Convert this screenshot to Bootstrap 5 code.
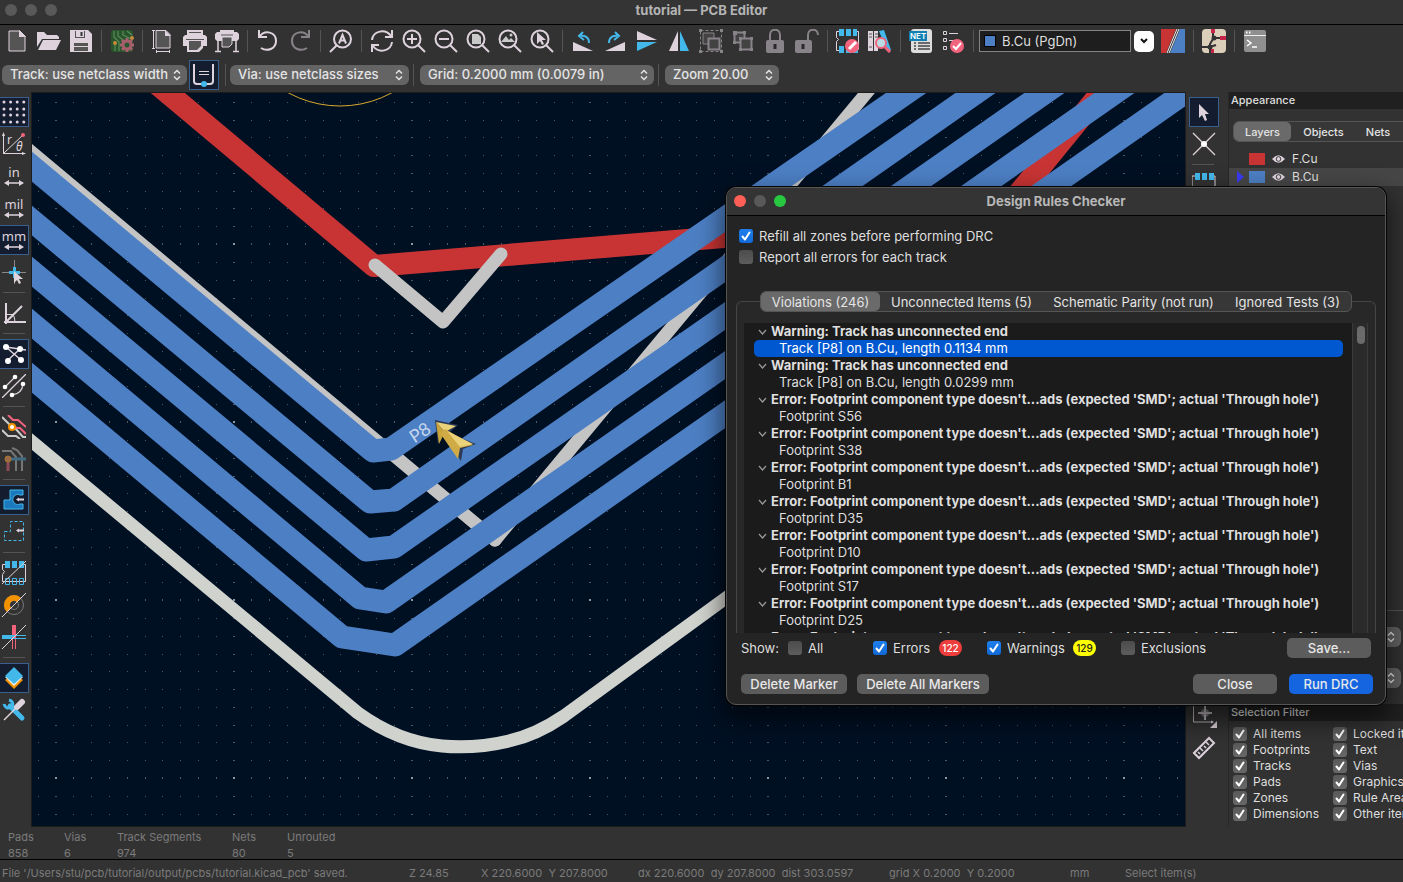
<!DOCTYPE html>
<html lang="en">
<head>
<meta charset="utf-8">
<meta name="viewport" content="width=device-width, initial-scale=1">
<title>tutorial — PCB Editor</title>
<link href="https://cdn.jsdelivr.net/npm/bootstrap@5.3.0/dist/css/bootstrap.min.css" rel="stylesheet">
<style>
:root{--ink:#ded3dd;--sky:#42b8eb;--rose:#f2647e;--line:#545454;--panel:#323232}
body{font-family:Inter,"Liberation Sans",sans-serif;font-size:12px;line-height:16px;color:#dfdfdf;background:var(--panel)}
svg{display:block;fill:none}
.i{stroke:var(--ink);stroke-width:2}
.f{fill:var(--ink)}
.s{fill:var(--sky)}
.ss{stroke:var(--sky);stroke-width:2}
.r{fill:var(--rose)}
.dk{fill:#555}
.titlebar{height:25px;border-bottom:1px solid #000;background:#343434;color:#b4b4b4;font-size:13px;font-weight:700;padding-bottom:4px}
.lights{left:5px;top:4px;gap:8px}
.lights i{width:12px;height:12px;border-radius:50%;background:#595959}
.bar-main{height:32px;padding-left:1px}
.bar-sub{height:35px;padding-left:2px}
.tool{width:32px;height:32px;padding:0;border:0;background:none;color:inherit;display:flex;align-items:center;justify-content:center;flex:none}
.tool.dim{opacity:.5}
.vsep{width:9px;flex:none;display:flex;justify-content:center}
.vsep::before{content:"";width:1px;height:22px;background:var(--line)}
.pick{appearance:none;border:0;border-radius:6px;height:20px;line-height:18px;padding:0 14px 2px 8px;color:#e4e4e4;font-size:13px;font-weight:500;background:#646464 url("data:image/svg+xml,%3Csvg xmlns='http://www.w3.org/2000/svg' width='8' height='12' fill='none' stroke='%23e4e4e4' stroke-width='1.5'%3E%3Cpath d='M1 4.5l3-3 3 3M1 7.5l3 3 3-3'/%3E%3C/svg%3E") no-repeat right 6px center}
.on{background:#131d2f;border:1px solid #3b5f8c}
.bar-sub .on{width:30px;height:30px;margin:0 2px}
.bar-sub .vsep + .pick{margin-left:2px}
.bar-sub .on + .vsep + .pick{margin-left:0}
.layerbox{width:152px;height:22px;margin-left:1px;border:1px solid #858585;background:#1e1e1e;font-size:13px;padding-left:4px;gap:6px}
.chip{width:12px;height:12px;background:#4d7fc4;border:1px solid #000}
.drop{width:20px;height:21px;border:0;border-radius:5px;background:#fff;padding:0;margin:0 3px}
.side{width:31px;padding-top:4px;flex:none}
.side .tool{width:28px}
.side .tool.on{width:29px;height:30px;margin:1px 0;border-left-width:0}
.side text{font-family:"Noto Sans",sans-serif}
.hsep{height:9px;display:flex;align-items:center;padding-left:3px}
.hsep::before{content:"";height:1px;width:22px;background:var(--line)}
.board{border:1px solid #1c1c1c;background:#001023;min-width:0}
.rside{width:42px;padding:4px 0 63px 3px;flex:none}
.rside .tool{width:30px}
.rside .tool.on{height:30px;margin:1px 0}
.dock{width:175px;flex:none;border-left:1px solid #282828}
.dockhead{height:17px;background:#202020;padding-left:2px;font-size:11px;font-weight:500}
.segs{background:#373737;border:1px solid #555;border-radius:6px;height:21px}
.segs button{border:0;background:none;color:#e4e4e4;padding:0;font-size:13px;line-height:18px;white-space:nowrap}
.segs button.active{background:#6a6a6a;border-radius:5px}
.dock .segs{margin:12px -20px 8px 4px}
.dock .segs button{font-size:11px;font-weight:500}
.layer{height:18px;padding-left:8px;gap:7px}
.layer svg:first-child{margin-right:1px}
.swatch{width:16px;height:12px}
.views{border-top:1px solid #555;padding:16px 2px 16px 0;gap:21px}
.views .pick{width:150px}
.filters{display:grid;grid-template-columns:100px 100px;grid-auto-rows:16px;padding:5px 0 4px 4px;margin-bottom:1px}
.opt{display:flex;align-items:center;gap:6px;white-space:nowrap}
.tick{appearance:none;width:14px;height:14px;border-radius:3px;background:linear-gradient(#4c4c4c,#5d5d5d);margin:0;flex:none}
.tick:checked{background:url("data:image/svg+xml,%3Csvg xmlns='http://www.w3.org/2000/svg' viewBox='0 0 14 14' fill='none' stroke='white' stroke-width='2' stroke-linecap='round' stroke-linejoin='round'%3E%3Cpath d='M3.5 7.5l2.500 3L10.500 3.500'/%3E%3C/svg%3E"),linear-gradient(#5a5a5a,#686868)}
.tick.blue:checked{background:url("data:image/svg+xml,%3Csvg xmlns='http://www.w3.org/2000/svg' viewBox='0 0 14 14' fill='none' stroke='white' stroke-width='2' stroke-linecap='round' stroke-linejoin='round'%3E%3Cpath d='M3.5 7.5l2.500 3L10.500 3.500'/%3E%3C/svg%3E"),linear-gradient(#1f7fee,#1169d6)}
.info{height:32px;font-size:11px;color:#7b7b7b;padding:2px 0 0 8px;display:grid;grid-template-columns:56px 53px 115px 55px 1fr}
.status{height:23px;border-top:1px solid #000;font-size:11px;color:#7b7b7b;padding:4px 0 0 2px;display:grid;grid-template-columns:407fr 72fr 157fr 251fr 181fr 55fr 278fr;align-items:center;white-space:pre}
.drc{right:17px;top:187px;width:660px;border-radius:10px;background:#242424;border:1px solid #565656;box-shadow:0 0 0 1px #050505,0 12px 26px 4px rgba(0,0,0,.55);z-index:5;font-size:13px}
.drchead{height:28px;padding-bottom:2px;border-bottom:1px solid #000;background:#343434;border-radius:9px 9px 0 0;color:#b8b8b8;font-weight:700}
.drc .lights{left:7px;top:7px}
.drcbody{padding:12px 9px 10px 9px}
.runopts{padding:0 3px;gap:5px}
.pages{margin-top:26px;padding:0 24px;position:relative;z-index:1}
.frame{border:1px solid #454545;border-bottom:0;border-radius:6px 6px 0 0;margin-top:-11px;padding:21px 7px 0;background:#282828}
.tree{height:310px;background:#1b1b1b;overflow:hidden;padding:0 9px 0 10px;list-style:none;margin:0;border-right:1px solid #3b3b3b}
.tree li{height:17px;line-height:17px;border-radius:5px;padding-left:25px;white-space:nowrap}
.tree li.top{padding-left:4px;font-weight:700;display:flex;align-items:center;gap:4px}
.tree li.sel{background:#0058d0;color:#fff}
.track{width:15px;background:#2b2b2b;border-right:1px solid #3b3b3b;padding:3px 0 0 4px}
.thumb{width:8px;height:18px;border-radius:4px;background:#6b6b6b}
.show{padding:0 5px;margin-top:5px}
.count{border-radius:9px;min-width:23px;height:16px;padding:0 2px;font-size:10px;line-height:16px;font-weight:500;text-align:center}
.push{border:0;border-radius:5px;height:20px;background:#5c5c5c;color:#e8e8e8;font-size:13px;font-weight:500;line-height:20px;padding:0;width:84px}
.push.go{background:#1565e0;margin-left:2px}
.actions{padding:0 3px 0 5px;gap:10px}
</style>
</head>
<body class="vh-100 d-flex flex-column overflow-hidden position-relative">
<header class="titlebar position-relative d-flex align-items-center justify-content-center flex-shrink-0">
<div class="lights position-absolute d-flex"><i></i><i></i><i></i></div>tutorial — PCB Editor</header>

<nav class="bar-main d-flex align-items-center flex-shrink-0" aria-label="Main toolbar">
<button class="tool" aria-label="New"><svg width="24" height="24"><path class="dk" d="M4 2h11l5 5v15H4z" stroke="#ded3dd" stroke-width="1"/><path class="f" d="M14 1l7 7h-7z"/></svg></button>
<button class="tool" aria-label="Open"><svg width="24" height="24"><path class="f" d="M0 18V3h7l3 3h10l2 2v2H5z"/><path class="f" d="M6 11h18l-5 10H1z"/></svg></button>
<button class="tool" aria-label="Save"><svg width="24" height="24"><path class="f" d="M1 1h18l4 4v18H1z"/><path class="dk" d="M6 2h10v7H6zM5 14h14v8H5z"/><path class="f" d="M7 2h8v6H7z"/><path d="M12.500 3v4" stroke="#333" stroke-width="2"/><path d="M5 17.500h14" stroke="#ded3dd"/></svg></button>
<span class="vsep"></span>
<button class="tool" aria-label="Board setup"><svg width="24" height="24"><rect x="1" y="1" width="22" height="22" rx="3" fill="#28562c"/><path d="M4 2v6l5 5v9M8 2v5l5 4M13 2v4l8 4M17 2l5 4M5 15v7" stroke="#5d8a5a" stroke-width="1.200"/><circle cx="5" cy="14" r="2" fill="#c48a3c"/><circle cx="22" cy="9" r="2" fill="#c48a3c"/><path d="M17 9v14M10 16h14M12 11l10 10M22 11L12 21" stroke="#a85f6d" stroke-width="3"/><circle cx="17" cy="16" r="4" stroke="#a85f6d" stroke-width="3" fill="#28562c"/></svg></button>
<span class="vsep"></span>
<button class="tool" aria-label="Page settings"><svg width="24" height="24"><path class="dk" d="M5 1.500h10l4 4V19H5z" stroke="#ded3dd"/><path class="f" d="M14 1l6 6h-6z"/><path d="M2.500 1v19M1 1.500h3M1 19.500h3M5 22.500h14M5.500 21v3M18.500 21v3" stroke="#ded3dd"/></svg></button>
<button class="tool" aria-label="Print"><svg width="24" height="24"><path class="f" d="M4 1h16v5H4zM2 6h20l2 2v9h-4v2l-4 4H4v-6H0V8z"/><path class="dk" d="M6 12h12v5l-4 4H6z"/><path d="M3 10.500h18M6 3.500h12" stroke="#555"/></svg></button>
<button class="tool" aria-label="Plot"><svg width="24" height="24"><path class="f" d="M5 1h14v2h3l2 2v5l-2 2H2l-2-2V5l2-2h3z"/><path class="dk" d="M7 8h10v7l-3 3H7z" stroke="#ded3dd"/><path d="M6 6h12" stroke="#555"/><path d="M3 12v11M21 12v11M0 22.500h6M18 22.500h6" stroke="#ded3dd" stroke-width="1.500"/></svg></button>
<span class="vsep"></span>
<button class="tool" aria-label="Undo"><svg width="24" height="24"><path class="i" d="M3 1v7h8M3 8C9 0 20 3 20 12c0 8-9 11-15 7"/></svg></button>
<button class="tool dim" aria-label="Redo"><svg width="24" height="24"><path class="i" d="M21 1v7h-8M21 8C15 0 4 3 4 12c0 8 9 11 15 7"/></svg></button>
<span class="vsep"></span>
<button class="tool" aria-label="Find"><svg width="24" height="24"><circle class="i" cx="13.500" cy="10" r="8.500"/><path class="i" d="M8 16l-7 7M10 14.500L13.500 6l3.500 8.500M11.500 11.500h4" stroke-width="2"/></svg></button>
<span class="vsep"></span>
<button class="tool" aria-label="Refresh"><svg width="24" height="24"><path class="i" d="M2 11C3 2 15-1 21 7M22 13c-1 9-13 12-19 4M22 1v7h-7M2 23v-7h7"/></svg></button>
<button class="tool" aria-label="Zoom in"><svg width="24" height="24"><circle class="i" cx="10" cy="10" r="8.500"/><path class="i" d="M16 16l7 7M5 10h10M10 5v10"/></svg></button>
<button class="tool" aria-label="Zoom out"><svg width="24" height="24"><circle class="i" cx="10" cy="10" r="8.500"/><path class="i" d="M16 16l7 7M5 10h10"/></svg></button>
<button class="tool" aria-label="Zoom to page"><svg width="24" height="24"><circle class="i" cx="10" cy="10" r="8.500"/><path class="i" d="M16 16l7 7"/><path fill="#c9c9c9" d="M6 5h6l3 3v7H6z"/></svg></button>
<button class="tool" aria-label="Zoom to objects"><svg width="24" height="24"><circle class="i" cx="10" cy="10" r="8.500"/><path class="i" d="M16 16l7 7"/><path fill="#c9c9c9" d="M3 13l5-6 3 4 2-2 4 4z"/><circle cx="13" cy="6" r="1.500" fill="#c9c9c9"/></svg></button>
<button class="tool" aria-label="Zoom to selection"><svg width="24" height="24"><circle class="i" cx="10" cy="10" r="8.500"/><path class="i" d="M16 16l7 7"/><path class="f" d="M7 3v12l3-3 2 4 2-1-2-4h4z"/></svg></button>
<span class="vsep"></span>
<button class="tool" aria-label="Rotate counterclockwise"><svg width="24" height="24"><path class="f" d="M2 13v9h20z"/><path class="ss" d="M12 3L8 7l5 4M8 7c6-1 10 1 10 7"/></svg></button>
<button class="tool" aria-label="Rotate clockwise"><svg width="24" height="24"><path class="f" d="M22 13v9H2z"/><path class="ss" d="M12 3l4 4-5 4M16 7C10 6 6 8 6 14"/></svg></button>
<button class="tool" aria-label="Mirror vertically"><svg width="24" height="24"><path class="f" d="M2 2v9h20z"/><path class="s" d="M2 22v-9h20z"/></svg></button>
<button class="tool" aria-label="Mirror horizontally"><svg width="24" height="24"><path class="f" d="M2 22h9V2z"/><path class="s" d="M22 22h-9V2z"/></svg></button>
<button class="tool dim" aria-label="Group"><svg width="24" height="24"><path d="M1.500 1.500h21v21h-21z" stroke="#ded3dd" stroke-dasharray="3 2"/><path d="M4 4h11v11H4z" stroke="#ded3dd" fill="#555"/><path d="M9.500 9.500h11v11h-11z" stroke="#ded3dd" stroke-width="2" fill="#555"/><path class="f" d="M0 0h3v3H0zM21 0h3v3h-3zM0 21h3v3H0zM21 21h3v3h-3z"/></svg></button>
<button class="tool dim" aria-label="Ungroup"><svg width="24" height="24"><path d="M3.500 3.500h10v10h-10z" stroke="#ded3dd" stroke-width="2" fill="#555"/><path d="M9.500 9.500h11v11h-11z" stroke="#ded3dd" stroke-width="2" fill="#555"/><path class="f" d="M2 2h4v4H2zM12 2h3v3h-3zM2 12h3v3H2zM8 8h3v3H8zM19 8h3v3h-3zM8 19h3v3H8zM19 19h3v3h-3z"/></svg></button>
<button class="tool dim" aria-label="Lock"><svg width="24" height="24"><path class="i" d="M7 11V6c0-7 10-7 10 0v5"/><rect class="f" x="3" y="11" width="18" height="13" rx="2"/><path d="M12 15v5" stroke="#222" stroke-width="3"/></svg></button>
<button class="tool dim" aria-label="Unlock"><svg width="24" height="24"><path class="i" d="M13 11V6c0-7 10-7 10 0"/><rect class="f" x="0" y="11" width="17" height="13" rx="2"/><path d="M8 15v5" stroke="#222" stroke-width="3"/></svg></button>
<span class="vsep"></span>
<button class="tool" aria-label="Footprint editor"><svg width="24" height="24"><path d="M3 2.500H.5v6l2 2-2 2v9H3M21 2.500h1.500v18" stroke="#ded3dd"/><path class="s" d="M3 0h5v7H3zM10 0h5v7h-5zM17 0h4v7h-4zM3 17h5v7H3zM10 17h5v7h-5zM17 17h5v7h-5z"/><circle class="r" cx="16" cy="17" r="7"/><path d="M13 20l7-7" stroke="#fff" stroke-width="3"/></svg></button>
<button class="tool" aria-label="Footprint browser"><svg width="24" height="24"><path class="f" d="M0 2h5v20H0zM6 2h4v20H6z"/><path class="s" d="M11 2l5-1 7 20-4 1z"/><path d="M1 5h3M1 8h3M7 5h3M7 8h3M1 18h3" stroke="#555"/><circle cx="13" cy="14" r="5" fill="#b9dce4" stroke="#f2647e" stroke-width="2"/><path d="M17 18l5 5" stroke="#f2647e" stroke-width="3"/></svg></button>
<span class="vsep"></span>
<button class="tool" aria-label="Update from schematic"><svg width="24" height="24" viewBox="0 0 24 24"><rect x="2" y="0" width="21" height="24" rx="3" fill="#dedede"/><path d="M5 14h2M9 14h12M5 17h2M9 17h12M5 20h2M9 20h12" stroke="#444" stroke-width="1.500"/><rect y="2" width="18" height="10" fill="#1180b5"/><text x="1" y="10" fill="#fff" font-size="8" font-weight="600">NET</text></svg></button>
<button class="tool" aria-label="Design rules checker"><svg width="24" height="24"><path d="M2.500 2.500h3v3h-3zM2.500 9.500h3v3h-3zM2.500 17.500h3v3h-3zM8 4.500h9M8 11.500h8" stroke="#ded3dd"/><circle class="r" cx="16" cy="17" r="7"/><path d="M12 17l3 3 5-6" stroke="#fff" stroke-width="2"/></svg></button>
<span class="vsep"></span>
<div class="layerbox d-flex align-items-center"><span class="chip"></span><span>B.Cu (PgDn)</span></div>
<button class="drop d-flex align-items-center justify-content-center" aria-label="Choose layer"><svg width="10" height="8"><path d="M2 2l3 3 3-3" stroke="#111" stroke-width="2"/></svg></button>
<button class="tool" aria-label="Layer pair"><svg width="24" height="24"><path fill="#c83434" d="M0 0h15L5 24H0z"/><path fill="#4d7fc4" d="M19 0h5v24H9z"/><path d="M16 0L6 24M18 0L8 24" stroke="#eee"/></svg></button>
<span class="vsep"></span>
<button class="tool" aria-label="Router"><svg width="24" height="24"><rect width="24" height="24" rx="4" fill="#dccfb9"/><path d="M11 0v10l-3 5v9M11 9h13M0 18h8l6-2" stroke="#333" stroke-width="2"/><path d="M9 0h4v4H9zM18 7h6v4h-6zM9 20h3v4H9z" fill="#c8254a"/><circle cx="12" cy="9" r="2.500" fill="#333"/><circle cx="8" cy="18" r="2.500" fill="#333"/></svg></button>
<span class="vsep"></span>
<button class="tool" aria-label="Scripting console"><svg width="24" height="24"><rect x="1" y="1" width="22" height="22" rx="2" fill="#8f8f8f"/><path d="M1 6.500h22" stroke="#eee"/><path d="M4 11l4 3-4 3M9 18h5" stroke="#fff" stroke-width="1.500"/><path d="M3 3.500h6" stroke="#fff" stroke-width="2" stroke-dasharray="1.500"/></svg></button>
</nav>

<nav class="bar-sub d-flex align-items-center flex-shrink-0" aria-label="Track settings">
<select class="pick" style="width:185px" aria-label="Track width"><option>Track: use netclass width</option></select>
<button class="tool on" aria-label="Use existing width"><svg width="24" height="24"><path d="M2 1v17q0 3 3 3h13q3 0 3-3V1" stroke="#ded3dd" stroke-width="2"/><path d="M7 8.500h10M7 11.500h10" stroke="#ded3dd"/><circle class="s" cx="12" cy="21" r="3"/></svg></button>
<span class="vsep"></span>
<select class="pick" style="width:179px" aria-label="Via size"><option>Via: use netclass sizes</option></select>
<span class="vsep"></span>
<select class="pick" style="width:234px" aria-label="Grid"><option>Grid: 0.2000 mm (0.0079 in)</option></select>
<span class="vsep"></span>
<select class="pick" style="width:114px" aria-label="Zoom"><option>Zoom 20.00</option></select>
</nav>

<main class="d-flex flex-grow-1" style="min-height:0">
<nav class="side" aria-label="Display options">
<button class="tool on" aria-label="Show grid"><svg width="24" height="24"><g stroke="#ded3dd" stroke-width="3" stroke-linecap="round" stroke-dasharray="0 6.600"><path d="M2 2h21M2 9h21M2 15h21M2 22h21"/></g></svg></button>
<button class="tool" aria-label="Polar coordinates"><svg width="24" height="24" viewBox="0 0 24 24"><path d="M1.500 22V2M1 21.500h22M2 21L21 3" stroke="#ded3dd"/><path class="f" d="M0 4l1.500-4L3 4zM20 20l4 1.500-4 1.500z"/><circle class="r" cx="21" cy="3" r="2"/><text class="f" x="5" y="12" font-size="12">r</text><text class="f" x="14" y="19" font-size="12" font-style="italic">θ</text></svg></button>
<button class="tool" aria-label="Inches"><svg width="24" height="24"><text class="f" x="12" y="13" font-size="13" text-anchor="middle">in</text><path d="M4 19h16" stroke="#ded3dd" stroke-width="1.500"/><path class="f" d="M2 19l5-3v6zM22 19l-5-3v6z"/></svg></button>
<button class="tool" aria-label="Mils"><svg width="24" height="24"><text class="f" x="12" y="13" font-size="13" text-anchor="middle">mil</text><path d="M4 19h16" stroke="#ded3dd" stroke-width="1.500"/><path class="f" d="M2 19l5-3v6zM22 19l-5-3v6z"/></svg></button>
<button class="tool on" aria-label="Millimeters"><svg width="24" height="24"><text class="f" x="12" y="13" font-size="13" text-anchor="middle">mm</text><path d="M4 19h16" stroke="#ded3dd" stroke-width="1.500"/><path class="f" d="M2 19l5-3v6zM22 19l-5-3v6z"/></svg></button>
<button class="tool" aria-label="Full-window crosshairs"><svg width="24" height="24"><path d="M0 12.500h24M12.500 0v24" stroke="#8b8589"/><path d="M7 12.500h11M12.500 7v11" stroke="#42b8eb" stroke-width="3"/><path class="f" d="M12 11v12l3-3 2 4 2-1-2-4h4z"/></svg></button>
<div class="hsep"></div>
<button class="tool" aria-label="Limit to 45 degrees"><svg width="24" height="24"><path class="i" d="M4 2v21M2 21h22M4 21L20 5"/><path d="M5 13.500h6q2 3 2 8" stroke="#ded3dd"/></svg></button>
<div class="hsep"></div>
<button class="tool on" aria-label="Show ratsnest"><svg width="24" height="24"><path d="M4 5l15 13M19 6L5 19M4 5l20 3" stroke="#ded3dd" stroke-width="1.500"/><g fill="#fff"><circle cx="4" cy="5" r="3"/><circle cx="18" cy="7" r="3"/><circle cx="19" cy="18" r="3"/><circle cx="6" cy="19" r="3"/></g></svg></button>
<button class="tool" aria-label="Curved ratsnest"><svg width="24" height="24"><path d="M0 24L24 0M3 13L13 3M10 21q10-1 11-11" stroke="#ded3dd" stroke-width="1.300"/><g fill="#fff"><circle cx="3" cy="13" r="2.300"/><circle cx="13" cy="3" r="2.300"/><circle cx="10" cy="21" r="2.300"/><circle cx="21" cy="10" r="2.300"/></g></svg></button>
<div class="hsep"></div>
<button class="tool" aria-label="Dim inactive nets"><svg width="24" height="24"><path d="M0 2l8 8M10 13h3l8 9h3M0 15l6 6h8l4 3" stroke="#ccc" stroke-width="2"/><path d="M6 0l5 5h5l8 7M10 10l5 3h3l6 6" stroke="#f2647e" stroke-width="2"/><circle cx="10" cy="12" r="3" fill="#fff" stroke="#f39200" stroke-width="2"/></svg></button>
<button class="tool" aria-label="Net highlighting"><svg width="24" height="24"><path d="M0 4h9l5 6v14M10 1l5 2 5 6v15" stroke="#777" stroke-width="2"/><path d="M7 12h17" stroke="#3f6b83" stroke-width="3"/><path d="M6 12v12" stroke="#8d4a58" stroke-width="3"/><circle cx="6" cy="12" r="3" fill="#966b49" stroke="#b0752c"/></svg></button>
<div class="hsep"></div>
<button class="tool on" aria-label="Filled zones"><svg width="24" height="24"><path d="M2 12h6V2h13v5h-3a5 5 0 1 0 0 9h3v5H2z" fill="#1d79bd" stroke="#42b8eb"/><path d="M14 11.500l3-2v1h5v2h-5v1z" class="f"/></svg></button>
<button class="tool" aria-label="Zone outlines"><svg width="24" height="24"><path d="M2.500 11.500h6v-10h13v19h-19z" stroke="#42b8eb" stroke-dasharray="3 2"/><path d="M14 10.500l3-2v1h5v2h-5v1z" class="f"/></svg></button>
<div class="hsep"></div>
<button class="tool" aria-label="Sketch footprints"><svg width="24" height="24"><path d="M3 3.500H.5v5l2 2-2 3v7h23v-17H22" stroke="#ded3dd"/><path class="s" d="M3 0h5v7H3zM10 0h5v7h-5zM17 0h5v7h-5z"/><path d="M3.500 17.500h4v6h-4zM10.500 17.500h4v6h-4zM17.500 17.500h4v6h-4z" stroke="#42b8eb"/><path d="M0 23L24 0" stroke="#ded3dd"/></svg></button>
<button class="tool" aria-label="Sketch pads"><svg width="24" height="24"><circle cx="12" cy="12" r="9.500" stroke="#777"/><circle cx="12" cy="12" r="4.500" stroke="#777"/><path d="M7 17A7 7 0 0 1 17 7" stroke="#f39200" stroke-width="6"/><path d="M0 24L24 0" stroke="#ded3dd"/></svg></button>
<button class="tool" aria-label="Sketch tracks"><svg width="24" height="24"><path d="M12 0v13" stroke="#f2647e" stroke-width="4"/><path d="M0 12h12" stroke="#42b8eb" stroke-width="4"/><path d="M10.500 12v12M13.500 12v12" stroke="#f2647e"/><path d="M12 10.500h12M12 13.500h12" stroke="#42b8eb"/><path d="M0 24L24 0" stroke="#ded3dd"/></svg></button>
<div class="hsep"></div>
<button class="tool on" aria-label="Appearance panel"><svg width="24" height="24"><path fill="#f39200" d="M3 14l9 9 9-9-3-2H6z"/><path fill="#eee" d="M3 11l9 9 9-9z"/><path class="s" d="M12 1l9 9-9 8-9-8z"/></svg></button>
<button class="tool" aria-label="Properties"><svg width="24" height="24"><path d="M8 8l12 12" stroke="#42b8eb" stroke-width="5" stroke-linecap="round"/><path d="M7 2c4 1 5 5 2 7s-6 1-7-3" stroke="#42b8eb" stroke-width="3"/><path d="M2 22L15 9" stroke="#ded3dd" stroke-width="1.500"/><path d="M15 9l5-5" stroke="#ded3dd" stroke-width="6" stroke-linecap="round"/></svg></button>
</nav>

<section class="board flex-grow-1" aria-label="Board">
<svg width="100%" height="100%" viewBox="32 93 1154 733" preserveAspectRatio="xMinYMin slice">
<defs><pattern id="dots" patternUnits="userSpaceOnUse" x="55" y="65" width="178" height="178">
<g fill="#4a5866"><path id="dr" d="M0 0h2v1H0zM18 0h1v1h-1zM36 0h1v1h-1zM54 0h1v1h-1zM72 0h1v1h-1zM90 0h1v1h-1zM107 0h1v1h-1zM125 0h1v1h-1zM143 0h1v1h-1zM161 0h1v1h-1z"/>
<use href="#dr" y="1"/><use href="#dr" y="19"/><use href="#dr" y="37"/><use href="#dr" y="55"/><use href="#dr" y="72"/><use href="#dr" y="90"/><use href="#dr" y="108"/><use href="#dr" y="126"/><use href="#dr" y="143"/><use href="#dr" y="161"/></g><path d="M0 0h2v2H0z" fill="#8f989f"/></pattern></defs>
<rect x="32" y="93" width="1154" height="733" fill="url(#dots)"/>
<circle cx="340" cy="-2" r="108" stroke="#d9a92e"/>
<g stroke="#c83434" stroke-width="22" stroke-linejoin="round"><path d="M144 73L374 266L760 234"/><path d="M1117 73L1024 187L960 265"/></g>
<g stroke="#c4c4c4" stroke-width="13" stroke-linecap="round" stroke-linejoin="round"><path d="M22 144L495 540"/><path d="M495 540L883 73"/><path d="M375 265L443 322L501 254"/></g>
<g stroke="#4d7fc4" stroke-width="23" stroke-linejoin="round">
<path d="M12 150L373 451L391 449L935 73"/>
<path d="M12 204L370 502L394 500L1004 73"/>
<path d="M12 255L366 550L394 547L1073 73"/>
<path d="M12 307L360 598L386 602L1143 73"/>
<path d="M12 361L342 637L395 645L1213 73"/></g>
<path d="M12 425L358 713Q398 742 442 746Q475 749 509 741Q536 735 564 716L800 544" stroke="#d0d2cd" stroke-width="13"/>
<text transform="translate(417 442) rotate(-33)" fill="#c4d5ec" font-size="18" x="-3" y="0" font-family="Lato,sans-serif">P8</text>
<path d="M435 420l23 5-9 8 27 11-13 5-2 12-18-26-5 9z" fill="#2b3b55"/>
<path d="M436 422l20 4-11 6z" fill="#ead27a"/><path d="M436 422l9 10-6 12z" fill="#c9a43c"/><path d="M440 433l5-4 28 16-13 3-2 11z" fill="#d0ab45"/><path d="M447 431l26 13-13 3z" fill="#ead27a"/>
</svg>
</section>

<nav class="rside d-flex flex-column" aria-label="Drawing tools">
<button class="tool on" aria-label="Select"><svg width="24" height="24"><path class="f" d="M7 4v14l3-3 3 6 2-1-2-6h4z"/></svg></button>
<button class="tool" aria-label="Local ratsnest"><svg width="24" height="24"><path d="M1 1l22 22M23 1L1 23" stroke="#ded3dd" stroke-width="1.300"/><circle cx="12" cy="12" r="3" fill="#fff"/></svg></button>
<div class="hsep"></div>
<button class="tool" aria-label="Place footprint"><svg width="24" height="24"><path d="M3 3H0v18h23V3h-2" stroke="#ded3dd"/><path class="s" d="M3 0h5v7H3zM10 0h5v7h-5zM17 0h5v7h-5z"/></svg></button>
<button class="tool mt-auto" aria-label="Set origin"><svg width="26" height="28"><path d="M2.500 3v17H22" stroke="#bdb4bc"/><path class="f" d="M1 4l1.500-3L4 4zM20 18.500l3 1.500-3 1.500z"/><circle cx="14" cy="11" r="4" fill="#777"/><path d="M14 4v14M7 11h14" stroke="#bdb4bc" stroke-width="2"/><path class="f" d="M26 19v7h-7z"/></svg></button>
<button class="tool" aria-label="Measure"><svg width="24" height="24"><path class="i" d="M2 17L17 2l5 5L7 22z"/><path d="M8 18l-2-2M11 15l-3-3M14 12l-2-2M17 9l-3-3" stroke="#ded3dd" stroke-width="1.500"/></svg></button>
</nav>

<aside class="dock d-flex flex-column overflow-hidden">
<div class="dockhead flex-shrink-0">Appearance</div>
<div class="segs d-flex flex-shrink-0" role="tablist">
<button class="active" style="width:57px" role="tab">Layers</button><button style="width:65px" role="tab">Objects</button><button style="width:44px" role="tab">Nets</button></div>
<div class="layer d-flex align-items-center flex-shrink-0"><svg width="4" height="12"></svg><span class="swatch" style="background:#c83434"></span><svg width="13" height="10" viewBox="0 0 14 10"><path d="M0 5q7-8 14 0q-7 8-14 0" class="f"/><circle cx="7" cy="5" r="2.500" stroke="#333"/></svg><span>F.Cu</span></div>
<div class="layer d-flex align-items-center flex-shrink-0" style="background:#464646"><svg width="4" height="12" overflow="visible"><path fill="#3a3af0" d="M0 0l7 6-7 6z"/></svg><span class="swatch" style="background:#4d7fc4"></span><svg width="13" height="10" viewBox="0 0 14 10"><path d="M0 5q7-8 14 0q-7 8-14 0" class="f"/><circle cx="7" cy="5" r="2.500" stroke="#333"/></svg><span>B.Cu</span></div>
<div class="views mt-auto d-flex flex-column align-items-end flex-shrink-0">
<select class="pick" aria-label="Presets"><option></option></select>
<select class="pick" aria-label="Viewports"><option></option></select></div>
<div class="dockhead flex-shrink-0">Selection Filter</div>
<div class="filters flex-shrink-0">
<label class="opt"><input class="tick" type="checkbox" checked>All items</label>
<label class="opt"><input class="tick" type="checkbox" checked>Locked items</label>
<label class="opt"><input class="tick" type="checkbox" checked>Footprints</label>
<label class="opt"><input class="tick" type="checkbox" checked>Text</label>
<label class="opt"><input class="tick" type="checkbox" checked>Tracks</label>
<label class="opt"><input class="tick" type="checkbox" checked>Vias</label>
<label class="opt"><input class="tick" type="checkbox" checked>Pads</label>
<label class="opt"><input class="tick" type="checkbox" checked>Graphics</label>
<label class="opt"><input class="tick" type="checkbox" checked>Zones</label>
<label class="opt"><input class="tick" type="checkbox" checked>Rule Areas</label>
<label class="opt"><input class="tick" type="checkbox" checked>Dimensions</label>
<label class="opt"><input class="tick" type="checkbox" checked>Other items</label>
</div>
</aside>
</main>

<section class="info flex-shrink-0">
<div>Pads<br>858</div><div>Vias<br>6</div><div>Track Segments<br>974</div><div>Nets<br>80</div><div>Unrouted<br>5</div>
</section>
<footer class="status flex-shrink-0"><span>File '/Users/stu/pcb/tutorial/output/pcbs/tutorial.kicad_pcb' saved.</span><span>Z 24.85</span><span>X 220.6000  Y 207.8000</span><span>dx 220.6000  dy 207.8000  dist 303.0597</span><span>grid X 0.2000  Y 0.2000</span><span>mm</span><span>Select item(s)</span></footer>

<section class="drc position-absolute" role="dialog" aria-label="Design Rules Checker">
<div class="drchead position-relative d-flex align-items-center justify-content-center"><div class="lights position-absolute d-flex"><i style="background:#ff5f57"></i><i></i><i style="background:#28c840"></i></div>Design Rules Checker</div>
<div class="drcbody">
<div class="runopts d-flex flex-column">
<label class="opt"><input class="tick blue" type="checkbox" checked>Refill all zones before performing DRC</label>
<label class="opt"><input class="tick" type="checkbox">Report all errors for each track</label></div>
<div class="pages"><div class="segs d-flex" role="tablist"><button class="active" style="width:119px" role="tab">Violations (246)</button><button style="width:163px" role="tab">Unconnected Items (5)</button><button style="width:181px" role="tab">Schematic Parity (not run)</button><button class="flex-grow-1" role="tab">Ignored Tests (3)</button></div></div>
<div class="frame"><div class="d-flex">
<ul class="tree flex-grow-1" id="tree"></ul>
<div class="track"><div class="thumb"></div></div></div></div>
<div class="show d-flex align-items-center">
<span style="width:47px">Show:</span>
<label class="opt" style="width:85px"><input class="tick" type="checkbox">All</label>
<div class="d-flex align-items-center" style="width:114px"><label class="opt" style="width:66px"><input class="tick blue" type="checkbox" checked>Errors</label><span class="count" style="background:#ee3d3d;color:#fff">122</span></div>
<div class="d-flex align-items-center" style="width:134px"><label class="opt" style="width:86px"><input class="tick blue" type="checkbox" checked>Warnings</label><span class="count" style="background:#ff0;color:#222">129</span></div>
<label class="opt"><input class="tick" type="checkbox">Exclusions</label>
<button class="push ms-auto">Save...</button></div>
<div class="actions d-flex mt-3"><button class="push" style="width:106px">Delete Marker</button><button class="push" style="width:132px">Delete All Markers</button><button class="push ms-auto">Close</button><button class="push go">Run DRC</button></div>
</div>
</section>

<script src="https://cdn.jsdelivr.net/npm/bootstrap@5.3.0/dist/js/bootstrap.bundle.min.js"></script>
<script>
const unconnected = 'Warning: Track has unconnected end';
const wrongType = "Error: Footprint component type doesn't...ads (expected 'SMD'; actual 'Through hole')";
const items = [[unconnected, 'Track [P8] on B.Cu, length 0.1134 mm'], [unconnected, 'Track [P8] on B.Cu, length 0.0299 mm'],
  ...['S56', 'S38', 'B1', 'D35', 'D10', 'S17', 'D25'].map(n => [wrongType, 'Footprint ' + n]), [wrongType]];
const chevron = '<svg width="9" height="8"><path d="M1 2l3.500 4L8 2" stroke="#999" stroke-width="1.200"/></svg>';
document.getElementById('tree').innerHTML = items.map(([head, child], k) =>
  `<li class="top">${chevron}${head}</li>` + (child ? `<li${k ? '' : ' class="sel"'}>${child}</li>` : '')).join('');
</script>
</body>
</html>
